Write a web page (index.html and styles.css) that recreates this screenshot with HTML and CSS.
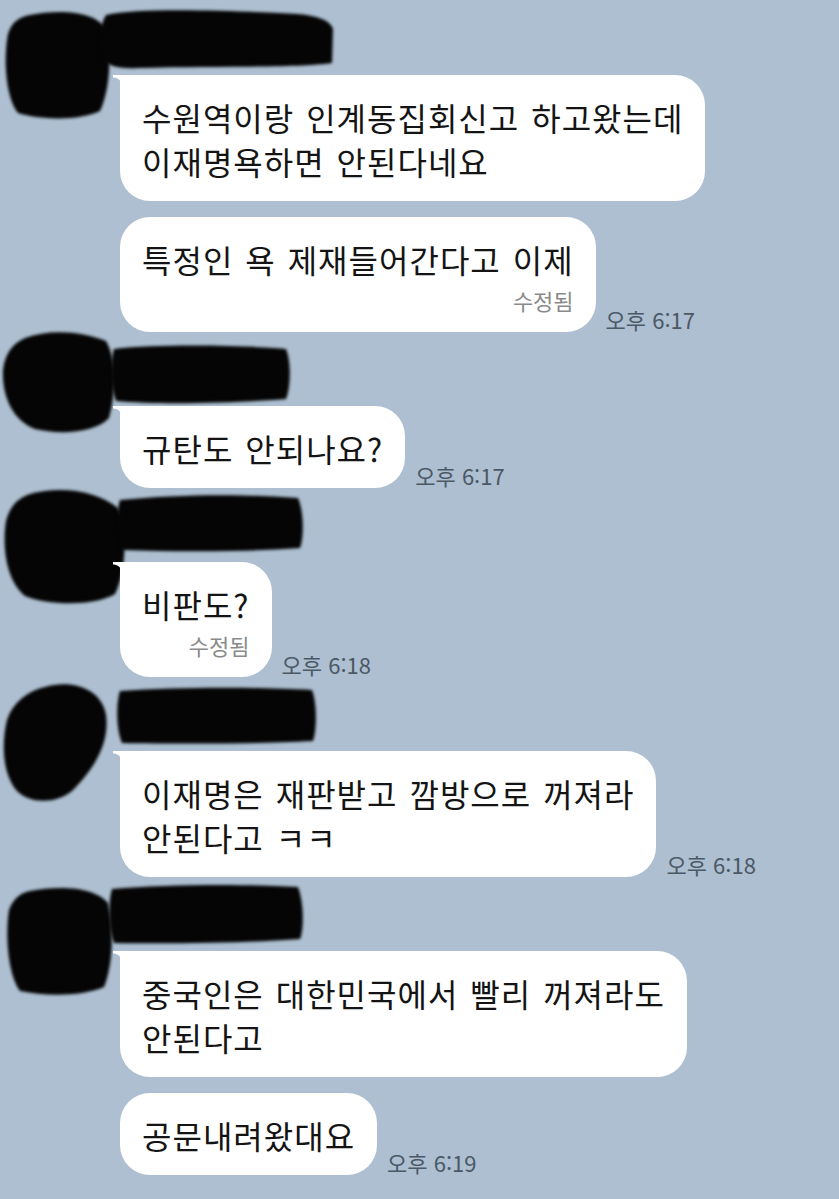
FILE: index.html
```html
<!DOCTYPE html>
<html lang="ko">
<head>
  <meta charset="UTF-8">
  <title>채팅</title>
  <meta name="viewport" content="width=device-width, initial-scale=1.0">
  <link rel="stylesheet" href="styles.css">
</head>
<body>

  <div class="chat">

    <!-- 1 -->
    <div class="group">
      <div class="avatar">
        <svg class="blob" width="140" height="140" viewBox="0 0 140 140"><path d="M30 16 C60 10 95 12 106 30 C112 55 110 90 100 112 C80 122 40 121 18 114 C6 100 3 60 8 35 C12 22 20 18 30 16 Z"/></svg>
      </div>
      <div class="body">
        <div class="name">
          <svg class="blob" width="250" height="80" viewBox="0 0 250 80"><path d="M8 10 C40 3 120 5 200 9 C220 11 232 15 235 24 L234 58 C200 63 120 61 40 63 C20 64 8 61 3 51 C0 35 2 20 8 10 Z"/></svg>
        </div>
        <div class="row">
          <div class="bubble first">수원역이랑 인계동집회신고 하고왔는데<br>이재명욕하면 안된다네요</div>
        </div>
        <div class="row">
          <div class="bubble">특정인 욕 제재들어간다고 이제<span class="edited">수정됨</span></div>
          <span class="time">오후 6:17</span>
        </div>
      </div>
    </div>

    <!-- 2 -->
    <div class="group">
      <div class="avatar">
        <svg class="blob" width="140" height="140" viewBox="0 0 140 140"><path d="M25 8 C50 -1 80 1 106 11 C117 30 116 62 109 88 C95 103 60 105 35 99 C12 90 2 66 3 40 C5 24 12 14 25 8 Z"/></svg>
      </div>
      <div class="body">
        <div class="name">
          <svg class="blob" width="250" height="80" viewBox="0 0 250 80"><path d="M16 13 C60 8 140 9 188 13 C193 25 193 50 188 63 C140 67 60 69 18 65 C12 50 12 25 16 13 Z"/></svg>
        </div>
        <div class="row">
          <div class="bubble first">규탄도 안되나요?</div>
          <span class="time">오후 6:17</span>
        </div>
      </div>
    </div>

    <!-- 3 -->
    <div class="group">
      <div class="avatar">
        <svg class="blob" width="140" height="140" viewBox="0 0 140 140"><path d="M30 8 C60 0 95 4 118 22 C128 45 126 85 115 108 C95 120 50 120 25 110 C6 95 2 60 6 35 C10 20 18 12 30 8 Z"/></svg>
      </div>
      <div class="body">
        <div class="name">
          <svg class="blob" width="250" height="80" viewBox="0 0 250 80"><path d="M22 8 C80 2 150 2 200 6 C206 20 206 45 202 56 C150 60 80 60 24 58 C18 45 18 20 22 8 Z"/></svg>
        </div>
        <div class="row">
          <div class="bubble first">비판도?<span class="edited">수정됨</span></div>
          <span class="time">오후 6:18</span>
        </div>
      </div>
    </div>

    <!-- 4 -->
    <div class="group">
      <div class="avatar">
        <svg class="blob" width="140" height="140" viewBox="0 0 140 140"><path d="M45 12 C72 4 102 14 106 40 C110 70 92 96 72 116 C56 129 30 129 17 116 C3 100 1 70 7 45 C13 27 28 16 45 12 Z"/></svg>
      </div>
      <div class="body">
        <div class="name">
          <svg class="blob" width="250" height="80" viewBox="0 0 250 80"><path d="M22 10 C80 6 160 6 214 9 C219 22 219 48 215 60 C160 63 80 63 24 62 C18 48 18 22 22 10 Z"/></svg>
        </div>
        <div class="row">
          <div class="bubble first">이재명은 재판받고 깜방으로 꺼져라<br>안된다고 ㅋㅋ</div>
          <span class="time">오후 6:18</span>
        </div>
      </div>
    </div>

    <!-- 5 -->
    <div class="group">
      <div class="avatar">
        <svg class="blob" width="140" height="140" viewBox="0 0 140 140"><path d="M30 16 C60 10 95 12 108 28 C114 55 113 90 104 112 C80 122 45 121 20 116 C8 100 5 60 9 35 C13 24 20 18 30 16 Z"/></svg>
      </div>
      <div class="body">
        <div class="name">
          <svg class="blob" width="250" height="80" viewBox="0 0 250 80"><path d="M14 8 C70 3 150 3 200 6 C206 22 206 48 202 58 C150 62 70 63 16 62 C10 48 10 22 14 8 Z"/></svg>
        </div>
        <div class="row">
          <div class="bubble first">중국인은 대한민국에서 빨리 꺼져라도<br>안된다고</div>
        </div>
        <div class="row">
          <div class="bubble">공문내려왔대요</div>
          <span class="time">오후 6:19</span>
        </div>
      </div>
    </div>

  </div>

</body>
</html>
```

FILE: styles.css
```css
body {
  margin: 0;
  background-color: #adbfd0;
  font-family: "Noto Sans CJK KR", "Noto Sans", sans-serif;
  color: #141414;
}

.chat {
  padding-top: 11px;
  display: flex;
  flex-direction: column;
  gap: 10px;
}

.group {
  display: flex;
}

.avatar {
  width: 120px;
  flex-shrink: 0;
}

.avatar .blob {
  display: block;
  margin-top: -12px;
}

.blob {
  fill: #050505;
  filter: blur(1.6px);
}

.body {
  display: flex;
  flex-direction: column;
  gap: 16px;
}

.name {
  height: 64px;
  margin-bottom: -16px;
}

.name .blob {
  display: block;
  margin-left: -22px;
  margin-top: -6px;
}

.row {
  display: flex;
  align-items: flex-end;
  gap: 10px;
}

.bubble {
  position: relative;
  background: #fff;
  border-radius: 30px;
  padding: 20px 22px 18px 22px;
  font-size: 32px;
  line-height: 44px;
  letter-spacing: 1px;
  word-spacing: 2px;
}

.bubble.first {
  border-top-left-radius: 4px;
}

.bubble.first::before {
  content: "";
  position: absolute;
  left: -7px;
  top: 0;
  width: 10px;
  height: 12px;
  background: radial-gradient(circle at 0 100%, transparent 9px, #fff 10px);
}

.edited {
  display: block;
  text-align: right;
  font-size: 22px;
  line-height: 28px;
  margin-top: 5px;
  color: #8a8a8a;
  letter-spacing: 0;
  word-spacing: 0;
}

.time {
  font-size: 22px;
  line-height: 26px;
  color: #4b5866;
  white-space: nowrap;
}
```
